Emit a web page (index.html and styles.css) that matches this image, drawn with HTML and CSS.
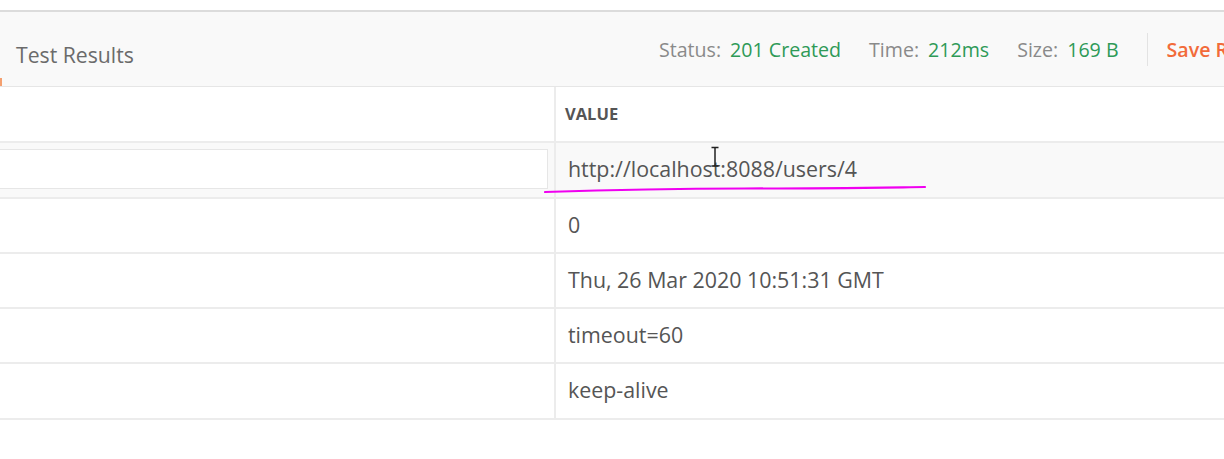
FILE: index.html
```html
<!DOCTYPE html>
<html>
<head>
<meta charset="utf-8">
<link rel="stylesheet" href="styles.css">
</head>
<body>
<div class="page">
  <div class="topgap"></div>
  <div class="header">
    <div class="tab"><span class="tab-mark"></span>Test Results</div>
    <div class="meta">
      <span class="lbl">Status:</span><span class="val">201 Created</span>
      <span class="lbl sp">Time:</span><span class="val">212ms</span>
      <span class="lbl sp">Size:</span><span class="val">169 B</span>
      <span class="sep"></span>
      <span class="save">Save Response</span>
    </div>
  </div>
  <div class="table">
    <div class="row head"><div class="key"></div><div class="value">VALUE</div></div>
    <div class="row hl"><div class="key"><div class="input"></div></div><div class="value">http://localhost:8088/users/4</div></div>
    <div class="row"><div class="key"></div><div class="value">0</div></div>
    <div class="row"><div class="key"></div><div class="value">Thu, 26 Mar 2020 10:51:31 GMT</div></div>
    <div class="row"><div class="key"></div><div class="value">timeout=60</div></div>
    <div class="row last"><div class="key"></div><div class="value">keep-alive</div></div>
  </div>
  <svg class="mark" width="400" height="12" viewBox="0 0 400 12"><path d="M1 8 C 60 6, 120 4.5, 200 4.5 S 340 3.5, 381 3" stroke="#f000f0" stroke-width="2.2" fill="none" stroke-linecap="round"/></svg>
  <svg class="cursor" width="10" height="22" viewBox="0 0 10 22"><path d="M1.5 1.5 H8.5 M5 1.5 V20 M1.5 20 H8.5" stroke="#222" stroke-width="1.5" fill="none"/></svg>
</div>
</body>
</html>
```

FILE: styles.css
```css
html, body { margin: 0; padding: 0; background: #fff; }
body { font-family: "Open Sans", "Noto Sans", sans-serif; color: #505050; }
.page { position: relative; width: 1224px; height: 459px; overflow: hidden; }
.topgap { height: 10px; border-bottom: 2px solid #dcdcdc; }
.header {
  height: 74px; background: #f9f9f9; border-bottom: 1px solid #e6e6e6;
  display: flex; align-items: stretch; white-space: nowrap;
}
.tab { position: relative; flex-shrink: 0; padding: 28px 0 0 16px; font-size: 21.2px; color: #6b6b6b; width: 600px; }
.tab-mark { position: absolute; left: 0; top: 66px; width: 2px; height: 8px; background: #f4a070; }
.meta { display: flex; flex-shrink: 0; align-items: center; height: 74px; padding-left: 43px; font-size: 19.6px; }
.lbl { color: #8a8a8a; margin-right: 9px; }
.lbl.sp { margin-left: 28px; }
.val { color: #2e9a57; }
.sep { width: 1px; height: 33px; background: #e3e3e3; margin: 0 19px 0 28px; }
.save { color: #f26b3a; font-weight: 600; }
.table { display: flex; flex-direction: column; }
.row { display: flex; height: 53px; border-bottom: 2px solid #ececec; }
.row.head { height: 54px; }
.row.hl { height: 54px; background: #f9f9f9; }
.row.last { height: 54px; }
.key { width: 554px; border-right: 2px solid #ececec; position: relative; }
.value { padding: 0 0 3px 12px; display: flex; align-items: center; font-size: 21.4px; color: #555; }
.head .value { font-size: 16.5px; font-weight: 700; color: #555; padding: 0 0 2px 9px; }
.input { position: absolute; left: 0; right: 6px; top: 6px; bottom: 8px; background: #fff; border: 1px solid #e6e6e6; border-left: none; }
.mark { position: absolute; left: 544px; top: 184px; }
.cursor { position: absolute; left: 710px; top: 146px; }
```
